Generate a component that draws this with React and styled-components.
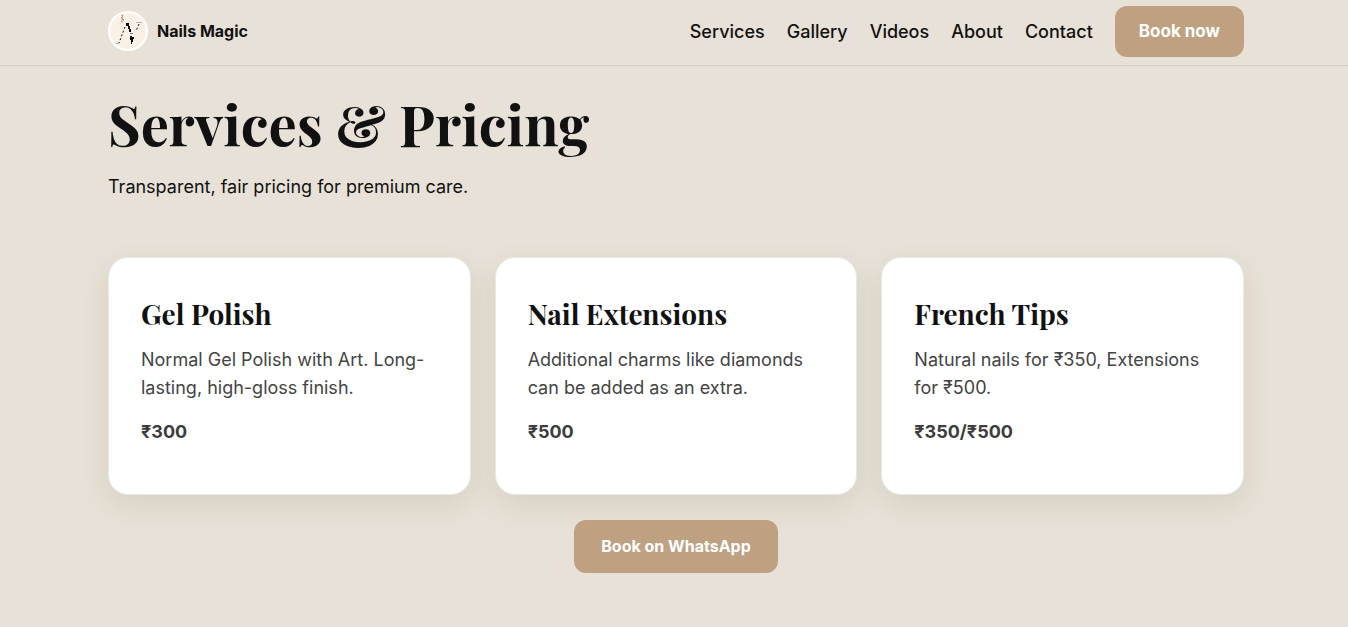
import styled, { createGlobalStyle } from "styled-components";

const GlobalStyle = createGlobalStyle`
  * {
    box-sizing: border-box;
    margin: 0;
    padding: 0;
  }

  body {
    background-color: #e8e1d7;
    color: #111;
    font-family: Inter, "Liberation Sans", sans-serif;
    font-size: 18px;
    line-height: 28px;
  }
`;

const Container = styled.div`
  max-width: 1200px;
  margin: 0 auto;
  padding: 0 30px 0 34px;
`;

const Header = styled.header`
  border-bottom: 1px solid #d6d1c6;
  padding: 6px 0 8px;
`;

const Bar = styled(Container)`
  display: flex;
  align-items: center;
  justify-content: space-between;
`;

const Brand = styled.a`
  display: flex;
  align-items: center;
  gap: 9px;
  padding-bottom: 2px;
  color: #111;
  font-size: 16px;
  font-weight: 700;
  text-decoration: none;
`;

const Nav = styled.nav`
  display: flex;
  align-items: center;
  gap: 22px;
`;

const NavLink = styled.a`
  color: #111;
  font-weight: 500;
  text-decoration: none;
`;

const Button = styled.button`
  background-color: #bfa182;
  border: none;
  border-radius: 12px;
  color: #fff;
  cursor: pointer;
  font-family: inherit;
  font-size: ${({ $large }) => ($large ? "16px" : "17px")};
  font-weight: 700;
  line-height: 27px;
  padding: ${({ $large }) => ($large ? "13px 27px" : "12px 24px")};
`;

const Title = styled.h1`
  font-family: "Playfair Display", "Liberation Serif", serif;
  font-size: 56px;
  font-weight: 700;
  line-height: 68px;
  margin-top: 24px;
`;

const Intro = styled.p`
  margin-top: 15px;
`;

const Cards = styled.div`
  display: grid;
  grid-template-columns: repeat(3, 1fr);
  gap: 24px;
  margin-top: 56px;
`;

const Card = styled.article`
  background-color: #fff;
  border: 1px solid #e8e8e6;
  border-radius: 20px;
  box-shadow: 0 10px 30px rgba(60, 60, 20, 0.1);
  color: #444;
  padding: 36px 32px 48px;
`;

const CardTitle = styled.h2`
  color: #111;
  font-family: "Playfair Display", "Liberation Serif", serif;
  font-size: 28px;
  font-weight: 700;
  line-height: 40px;
  margin-bottom: 12px;
`;

const Price = styled.p`
  color: #3d3d3d;
  font-weight: 700;
  margin-top: 16px;
`;

const Actions = styled.div`
  display: flex;
  justify-content: center;
  padding: 25px 0 54px;
`;

const links = ["Services", "Gallery", "Videos", "About", "Contact"];

const services = [
  {
    name: "Gel Polish",
    text: "Normal Gel Polish with Art. Long-lasting, high-gloss finish.",
    price: "₹300",
  },
  {
    name: "Nail Extensions",
    text: "Additional charms like diamonds can be added as an extra.",
    price: "₹500",
  },
  {
    name: "French Tips",
    text: "Natural nails for ₹350, Extensions for ₹500.",
    price: "₹350/₹500",
  },
];

function Logo() {
  return (
    <svg width="40" height="40" viewBox="0 0 40 40" aria-hidden="true">
      <circle cx="20" cy="20" r="20" fill="#fff" />
      <circle cx="20" cy="20" r="18" fill="#faf0e6" />
      <path
        d="M13 4l2 1-2 2 2 1-2 2 2 1M15 4l-1 3 2 2-2 2"
        fill="none"
        stroke="#b89b74"
        strokeWidth="1"
      />
      <path d="M18 12h3v3h1v3h1v3h-2v-3h-1v-3h-2z" fill="#080808" />
      <path d="M22 25h2v1h2v2h-1v3h-1v2h-1v-4h-1z" fill="#080808" />
      <path
        d="M17 16l-6 16M31 13l-3 7"
        fill="none"
        stroke="#111"
        strokeWidth="1"
        strokeDasharray="2 2"
      />
      <path d="M22 22h3v1h-3z" fill="#777" />
      <path d="M28 11h6v1h-6zM8 32h3v1h-3z" fill="#b8b0a8" />
    </svg>
  );
}

function App() {
  return (
    <>
      <GlobalStyle />
      <Header>
        <Bar>
          <Brand href="#home">
            <Logo />
            <span>Nails Magic</span>
          </Brand>
          <Nav>
            {links.map((link) => (
              <NavLink key={link} href={`#${link.toLowerCase()}`}>
                {link}
              </NavLink>
            ))}
            <Button type="button">Book now</Button>
          </Nav>
        </Bar>
      </Header>

      <Container as="main">
        <Title>Services &amp; Pricing</Title>
        <Intro>Transparent, fair pricing for premium care.</Intro>
        <Cards>
          {services.map((service) => (
            <Card key={service.name}>
              <CardTitle>{service.name}</CardTitle>
              <p>{service.text}</p>
              <Price>{service.price}</Price>
            </Card>
          ))}
        </Cards>
        <Actions>
          <Button type="button" $large>
            Book on WhatsApp
          </Button>
        </Actions>
      </Container>
    </>
  );
}

export default App;
